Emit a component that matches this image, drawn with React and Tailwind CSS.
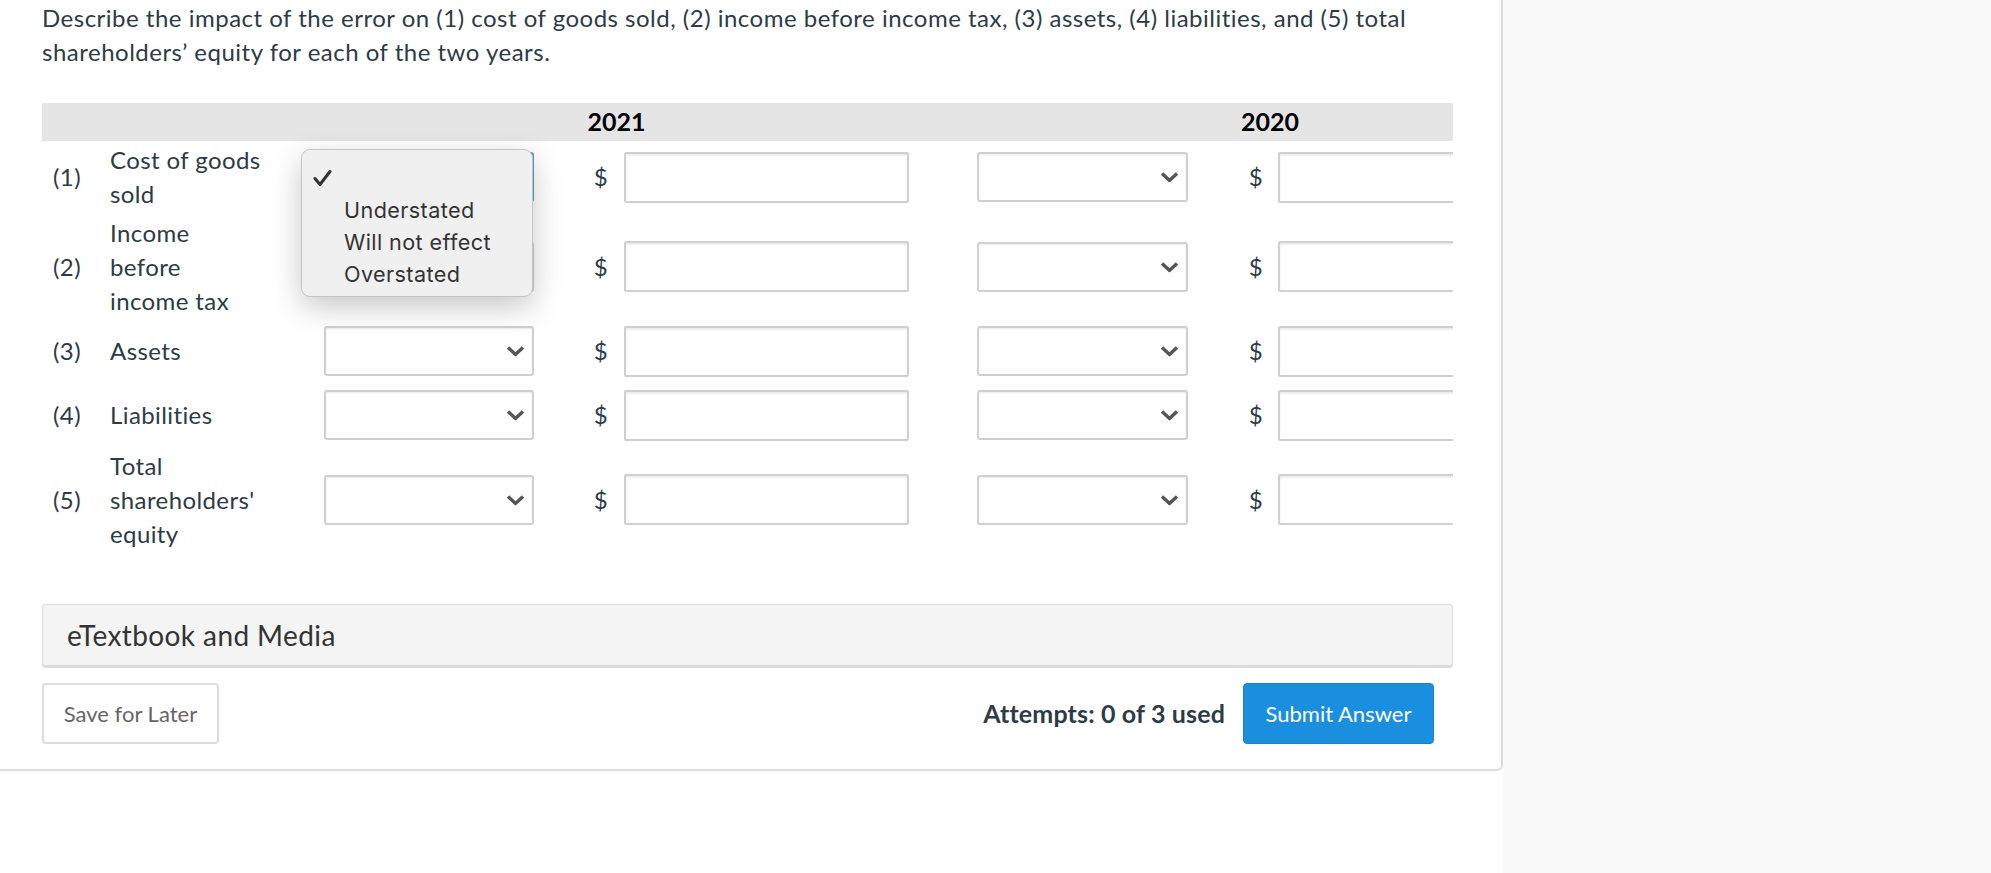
import React from "react";

const rows = [
  { n: "(1)", lines: ["Cost of goods", "sold"], h: "h-[72px]", focus: true },
  { n: "(2)", lines: ["Income", "before", "income tax"], h: "h-[107px]" },
  { n: "(3)", lines: ["Assets"], h: "h-[62px]" },
  { n: "(4)", lines: ["Liabilities"], h: "h-[66px]" },
  { n: "(5)", lines: ["Total", "shareholders'", "equity"], h: "h-[103px]" },
];

const Chevron = () => (
  <svg width="19" height="11" viewBox="0 0 19 11" className="absolute right-[7px] top-1/2 -translate-y-1/2">
    <path d="M2 2 L9.5 9 L17 2" fill="none" stroke="#555555" strokeWidth="3.4" />
  </svg>
);

const SelectBox = ({ width, focus }) => (
  <div
    className={
      "relative h-[50px] rounded-[3px] border-2 bg-white shadow-[inset_0_1px_2px_rgba(0,0,0,0.08)] " +
      width +
      (focus ? " border-[#5b9ad8]" : " border-[#d0d0d0]")
    }
  >
    <Chevron />
  </div>
);

const InputBox = () => (
  <div className="h-[51px] w-[285px] rounded-[2px] border-2 border-[#d0d0d0] bg-white shadow-[inset_0_2px_2px_rgba(0,0,0,0.08)]" />
);

const Popup = () => (
  <div className="absolute left-[-23px] top-[-3px] z-10 w-[232px] h-[148px] rounded-[9px] border border-[#c4c4c4] bg-[#f0f0f0] pt-[12px] shadow-[0_10px_30px_rgba(0,0,0,0.22)] font-['Inter','Liberation_Sans',sans-serif] text-[21.6px] text-[#333333]">
    <div className="h-[32px] flex items-center pl-[11px]">
      <svg width="19" height="18" viewBox="0 0 19 18">
        <path d="M2 9.5 L7 15.5 L17 2.5" fill="none" stroke="#333333" strokeWidth="3" strokeLinecap="round" strokeLinejoin="round" />
      </svg>
    </div>
    <div className="h-[32px] flex items-center pl-[42px]">Understated</div>
    <div className="h-[32px] flex items-center pl-[42px]">Will not effect</div>
    <div className="h-[32px] flex items-center pl-[42px]">Overstated</div>
  </div>
);

export default function App() {
  return (
    <div className="flex w-full h-[873px] bg-white font-['Lato','Liberation_Sans',sans-serif] text-[#2d3b45]">
      <div className="w-[1503px] shrink-0">
        <div className="h-[771px] border-r-2 border-b-2 border-[#dddddd] rounded-br-[6px] pl-[42px] pr-[48px] flex flex-col">
          <p className="pt-[1px] text-[24px] leading-[34px] tracking-[0.5px]">
            Describe the impact of the error on (1) cost of goods sold, (2) income before income tax, (3) assets, (4) liabilities, and (5) total shareholders’ equity for each of the two years.
          </p>

          <div className="mt-[34px] w-[1411px] overflow-hidden">
            <div className="flex w-[1521px] h-[38px] items-center bg-[#e5e5e5] text-[25px] font-bold text-black">
              <div className="w-[282px]" />
              <div className="w-[585px] text-center">2021</div>
              <div className="w-[68px]" />
              <div className="w-[586px] text-center">2020</div>
            </div>

            {rows.map((r, i) => (
              <div key={i} className={"flex w-[1521px] items-center text-[24px] leading-[34px] tracking-[0.4px] " + r.h}>
                <div className="w-[68px] pl-[11px]">{r.n}</div>
                <div className="w-[214px]">
                  {r.lines.map((l, j) => (
                    <div key={j}>{l}</div>
                  ))}
                </div>
                <div className="relative w-[210px]">
                  <SelectBox width="w-[210px]" focus={r.focus} />
                  {r.focus && <Popup />}
                </div>
                <div className="w-[90px] text-right pr-[16px]">$</div>
                <InputBox />
                <div className="w-[68px]" />
                <SelectBox width="w-[211px]" />
                <div className="w-[90px] text-right pr-[15px]">$</div>
                <InputBox />
              </div>
            ))}
          </div>

          <div className="mt-[53px] h-[64px] flex items-center rounded-[4px] border border-b-[3px] border-[#dcdcdc] bg-[#f4f4f4] pl-[24px] text-[28px] tracking-[0.4px] text-[#333333]">
            eTextbook and Media
          </div>

          <div className="mt-[15px] flex items-center justify-between pr-[19px]">
            <button className="h-[61px] w-[177px] rounded-[4px] border-2 border-[#dddddd] bg-white text-[22px] text-[#666666]">
              Save for Later
            </button>
            <div className="flex items-center gap-[18px]">
              <span className="text-[25px] tracking-[0.15px] font-bold text-[#2d3b45]">Attempts: 0 of 3 used</span>
              <button className="h-[61px] w-[191px] rounded-[4px] border border-[#1681cf] bg-[#1a8fdf] text-[22px] text-white">
                Submit Answer
              </button>
            </div>
          </div>
        </div>
      </div>
      <div className="flex-1 bg-[#f9f9f9]" />
    </div>
  );
}
